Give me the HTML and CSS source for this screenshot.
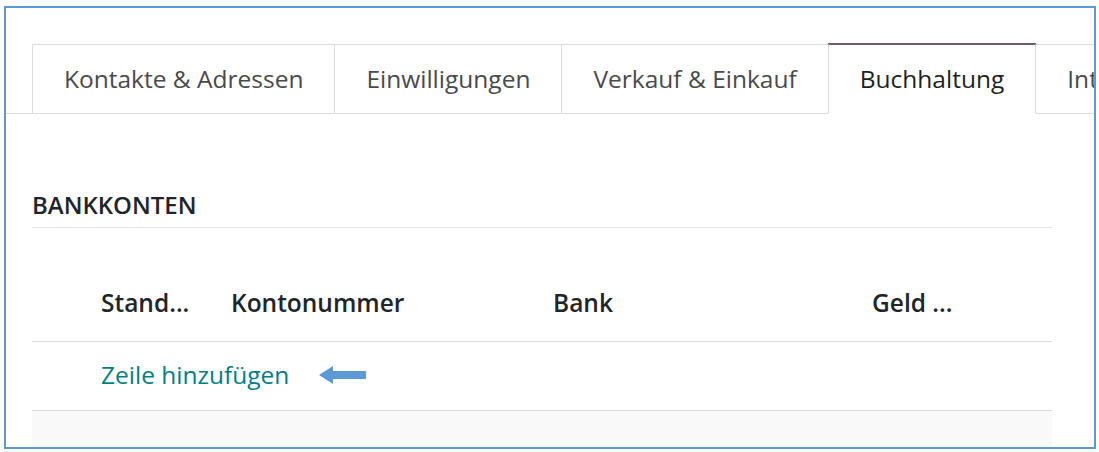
FILE: index.html
```html
<!DOCTYPE html>
<html lang="de">
<head>
<meta charset="utf-8">
<title>Buchhaltung</title>
<link rel="stylesheet" href="styles.css">
</head>
<body>
<div class="frame">
  <ul class="tabs">
    <li class="tab">Kontakte &amp; Adressen</li>
    <li class="tab">Einwilligungen</li>
    <li class="tab">Verkauf &amp; Einkauf</li>
    <li class="tab active">Buchhaltung</li>
    <li class="tab">Interne Notizen</li>
  </ul>
  <div class="pane">
    <h3 class="section-title">BANKKONTEN</h3>
    <table class="list">
      <colgroup>
        <col class="c-handle">
        <col class="c-stand">
        <col class="c-konto">
        <col class="c-bank">
        <col>
      </colgroup>
      <thead>
        <tr>
          <th></th>
          <th>Stand...</th>
          <th>Kontonummer</th>
          <th>Bank</th>
          <th>Geld ...</th>
        </tr>
      </thead>
      <tbody>
        <tr>
          <td></td>
          <td colspan="4">
            <div class="add-row">
              <a class="add-line" href="#">Zeile hinzufügen</a>
              <svg class="arrow" width="47" height="20" viewBox="0 0 47 20" aria-hidden="true">
                <polygon points="0,10 14,1 14,6 47,6 47,14 14,14 14,19" fill="#5b9bd5"/>
              </svg>
            </div>
          </td>
        </tr>
      </tbody>
      <tfoot>
        <tr><td colspan="5"></td></tr>
      </tfoot>
    </table>
  </div>
</div>
</body>
</html>
```

FILE: styles.css
```css
* { box-sizing: border-box; }

html, body {
  margin: 0;
  background: #ffffff;
}

body {
  font-family: "Open Sans", "Noto Sans", sans-serif;
  font-size: 24.5px;
  color: #212529;
}

.frame {
  margin: 6px 3px 3px 4px;
  height: 443px;
  border: 2px solid #5b9bd5;
  overflow: hidden;
  padding-top: 36px;
}

.tabs {
  list-style: none;
  margin: 0;
  padding: 0 0 0 26px;
  display: flex;
  border-bottom: 1px solid #dcdcdc;
  white-space: nowrap;
}

.tab {
  flex: none;
  padding: 16px 31px;
  line-height: 36px;
  border: 1px solid #dcdcdc;
  border-bottom: none;
  margin-right: -1px;
  color: #4a4a4a;
  background: #ffffff;
}

.tab.active {
  color: #1f1f1f;
  border-top-color: #6e5a68;
  box-shadow: 0 -1px 0 #6e5a68;
  padding-bottom: 17px;
  margin-bottom: -1px;
  position: relative;
}

.pane {
  padding: 76px 42px 0 26px;
}

.section-title {
  margin: 0;
  font-size: 24px;
  font-weight: 600;
  line-height: 30px;
  padding-bottom: 7px;
  border-bottom: 1px solid #e4e4e4;
  color: #212529;
}

.list {
  width: 100%;
  border-collapse: separate;
  border-spacing: 0;
  table-layout: fixed;
  margin-top: 38px;
}

.c-handle { width: 53px; }
.c-stand { width: 130px; }
.c-konto { width: 322px; }
.c-bank { width: 319px; }

.list th {
  padding: 19px 0 20px 16px;
  line-height: 36px;
  text-align: left;
  font-weight: 600;
  border-bottom: 1px solid #dcdcdc;
  white-space: nowrap;
  overflow: hidden;
  color: #212529;
}

.list tbody td {
  padding: 15px 0 17px 16px;
  line-height: 36px;
  border-bottom: 1px solid #dcdcdc;
}

.list tfoot td {
  height: 36px;
  padding: 0;
  background: #f9f9f9;
}

.add-row {
  display: flex;
  align-items: center;
  gap: 30px;
}

.add-line {
  color: #017e84;
  text-decoration: none;
}

.arrow {
  display: block;
  flex: none;
}
```
